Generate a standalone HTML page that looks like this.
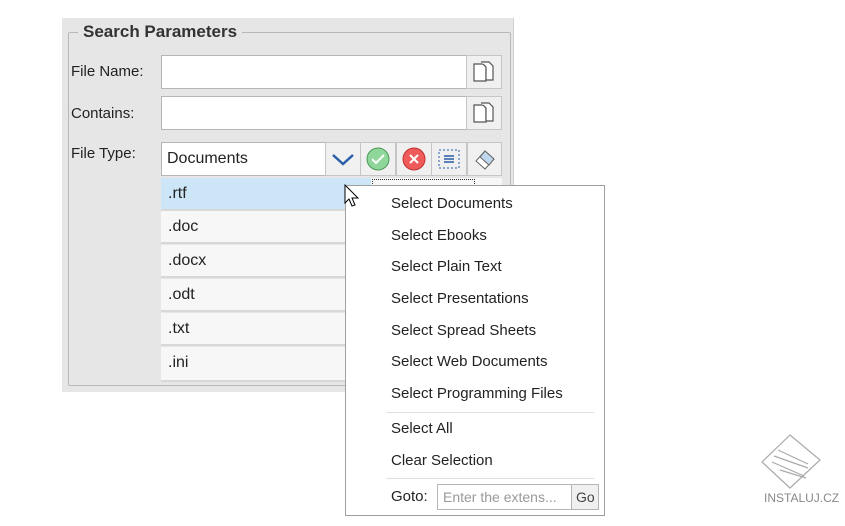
<!DOCTYPE html>
<html><head><style>
body{margin:0;width:845px;height:526px;background:#fff;position:relative;overflow:hidden;font-family:"Liberation Sans",sans-serif;}
.a{position:absolute;}
.panel{left:62px;top:18px;width:451px;height:374px;background:#e6e6e6;border-right:1px solid #d0d0d0;}
.group{left:68px;top:32px;width:441px;height:352px;border:1px solid #b8b8b8;border-radius:2px;}
.legend{left:78px;top:22px;background:#e6e6e6;padding:0 5px;font-weight:bold;font-size:17px;color:#333;}
.lbl{font-size:15px;color:#222;}
.field{background:#fff;border:1px solid #b5b5b5;box-sizing:border-box;}
.btn{background:#f0f0f0;border:1px solid #c5c5c5;box-sizing:border-box;display:flex;align-items:center;justify-content:center;}
.row{left:161px;width:341px;height:33px;background:#f7f7f7;border-bottom:2px solid #d8d8d8;box-sizing:border-box;font-size:16px;color:#222;padding:7px 0 0 7px;}
.menu{left:345px;top:185px;width:260px;height:331px;background:#fff;border:1px solid #a0a0a0;box-sizing:border-box;}
.mi{position:absolute;left:45px;font-size:15px;color:#222;}
.sep{position:absolute;left:40px;width:208px;height:1px;background:#e0e0e0;}
</style></head><body>
<div class="a panel"></div>
<div class="a group"></div>
<div class="a legend">Search Parameters</div>
<div class="a lbl" style="left:71px;top:63px">File Name:</div>
<div class="a lbl" style="left:71px;top:105px">Contains:</div>
<div class="a lbl" style="left:71px;top:145px">File Type:</div>
<div class="a field" style="left:161px;top:55px;width:306px;height:34px"></div>
<div class="a btn" style="left:466px;top:55px;width:36px;height:34px"><svg width="24" height="24" viewBox="0 0 24 24" fill="#fff" stroke="#555" stroke-width="1.2"><path d="M2 4h9l3 3v14H2z"/><path d="M9 2h8l4 4v14h-7V7l-3-3"/></svg></div>
<div class="a field" style="left:161px;top:96px;width:306px;height:34px"></div>
<div class="a btn" style="left:466px;top:96px;width:36px;height:34px"><svg width="24" height="24" viewBox="0 0 24 24" fill="#fff" stroke="#555" stroke-width="1.2"><path d="M2 4h9l3 3v14H2z"/><path d="M9 2h8l4 4v14h-7V7l-3-3"/></svg></div>
<div class="a field" style="left:161px;top:142px;width:165px;height:34px;font-size:16px;color:#222;padding:7px 0 0 5px">Documents</div>
<div class="a btn" style="left:325px;top:142px;width:36px;height:34px"><svg width="24" height="16"><path d="M2 4l10 9 10-9" fill="none" stroke="#2a5da8" stroke-width="2.5"/></svg></div>
<div class="a btn" style="left:360px;top:142px;width:36px;height:34px"><svg width="26" height="26"><circle cx="13" cy="13" r="11" fill="#8fd69a" stroke="#4a9a55"/><path d="M7 13l4 4 8-8" fill="none" stroke="#fff" stroke-width="2"/></svg></div>
<div class="a btn" style="left:396px;top:142px;width:36px;height:34px"><svg width="26" height="26"><circle cx="13" cy="13" r="11" fill="#ef5b5b" stroke="#c03030"/><path d="M9 9l8 8M17 9l-8 8" stroke="#fff" stroke-width="2"/></svg></div>
<div class="a btn" style="left:431px;top:142px;width:36px;height:34px"><svg width="24" height="24"><rect x="2" y="3" width="20" height="18" fill="none" stroke="#2a5da8" stroke-dasharray="2 2"/><path d="M7 9h10M7 12h10M7 15h10" stroke="#2a5da8" stroke-width="1.5"/></svg></div>
<div class="a btn" style="left:467px;top:142px;width:35px;height:34px"><svg width="24" height="24"><path d="M3 14l9-10 9 8-9 10z" fill="#fff" stroke="#666"/><path d="M7 10l9 8 5-6-9-8z" fill="#c0d8ee" stroke="#666"/></svg></div>
<div class="a row" style="top:178px;background:#cde6f7;width:210px">.rtf</div>
<div class="a" style="left:371px;top:178px;width:131px;height:33px;background:#f7f7f7;border-bottom:2px solid #d8d8d8;box-sizing:border-box"></div>
<div class="a" style="left:372px;top:179px;width:101px;height:8px;border:1px dotted #333;border-bottom:none"></div>
<div class="a row" style="top:211px">.doc</div>
<div class="a row" style="top:245px">.docx</div>
<div class="a row" style="top:279px">.odt</div>
<div class="a row" style="top:313px">.txt</div>
<div class="a row" style="top:347px;height:35px">.ini</div>
<div class="a menu">
<div class="mi" style="top:9px">Select Documents</div>
<div class="mi" style="top:41px">Select Ebooks</div>
<div class="mi" style="top:72px">Select Plain Text</div>
<div class="mi" style="top:104px">Select Presentations</div>
<div class="mi" style="top:136px">Select Spread Sheets</div>
<div class="mi" style="top:167px">Select Web Documents</div>
<div class="mi" style="top:199px">Select Programming Files</div>
<div class="sep" style="top:226px"></div>
<div class="mi" style="top:234px">Select All</div>
<div class="mi" style="top:266px">Clear Selection</div>
<div class="sep" style="top:292px"></div>
<div class="mi" style="top:302px">Goto:</div>
<div class="a" style="left:91px;top:298px;width:135px;height:26px;border:1px solid #b5b5b5;box-sizing:border-box;font-size:14px;color:#999;padding:4px 0 0 5px;white-space:nowrap;overflow:hidden">Enter the extens...</div>
<div class="a" style="left:225px;top:298px;width:28px;height:26px;border:1px solid #b5b5b5;background:#f0f0f0;box-sizing:border-box;font-size:14px;color:#444;padding:4px 0 0 4px">Go</div>
</div>
<svg class="a" style="left:344px;top:184px" width="18" height="26"><path d="M1 1v18l4-4 3 7 3-1-3-7h6z" fill="#fff" stroke="#000"/></svg>
<svg class="a" style="left:760px;top:430px" width="70" height="60"><g fill="none" stroke="#aaa" stroke-width="1.2"><path d="M30 5l30 25-30 28L2 32z"/><path d="M18 20l30 14M14 26l34 12M12 32l32 14M20 40l26 8"/></g></svg>
<div class="a" style="left:764px;top:491px;font-size:12px;color:#888">INSTALUJ.CZ</div>
</body></html>
